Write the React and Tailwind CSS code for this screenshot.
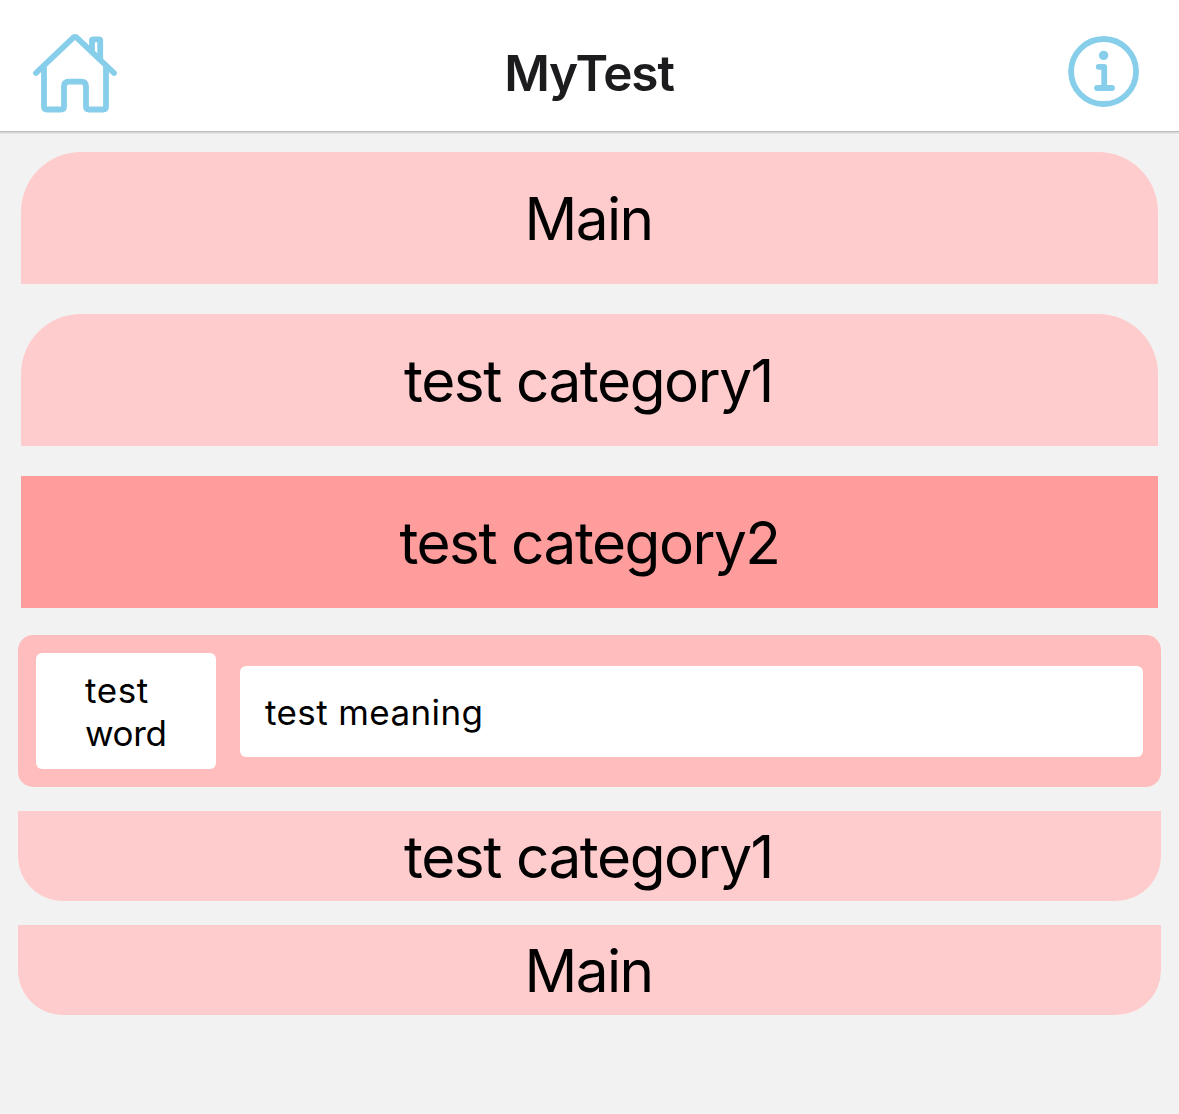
const Home = () => (
  <svg width="84" height="80" viewBox="0 0 84 80" fill="none" stroke="#87ceeb" strokeWidth="5.8" strokeLinecap="round" strokeLinejoin="round">
    <path d="M3 39 39.5 4.3Q42 1.7 44.5 4.3L81 39M11 32V72.5Q11 75.5 14 75.5H28Q31 75.5 31 72.5V52.5Q31 47.7 35.8 47.7H48.2Q53 47.7 53 52.5V72.5Q53 75.5 56 75.5H70Q73 75.5 73 72.5V32M59 18V6.5Q59 5.3 60.2 5.3H65.8Q67.2 5.3 67.2 6.5V25" />
  </svg>
);
const Info = () => (
  <svg width="72" height="72" viewBox="0 0 72 72" fill="none" stroke="#87ceeb" strokeWidth="5.8" strokeLinecap="round" strokeLinejoin="round">
    <circle cx="35.6" cy="35.5" r="32.5" />
    <circle cx="35.6" cy="19.4" r="4.7" fill="#87ceeb" stroke="none" />
    <path d="M30.7 30.8H36.2V52M29 52H44" />
  </svg>
);
const top = "mx-[21px] flex h-[132px] items-center justify-center rounded-t-[60px] bg-[#ffcccd] pt-[2px]";
const bottom = "mx-[18px] mt-6 flex h-[90px] items-center justify-center rounded-b-[45px] bg-[#ffcccd] pt-[2px]";

export default function App() {
  return (
    <div className="h-[1114px] overflow-hidden bg-[#f2f2f2] font-['Inter',sans-serif] text-[58.5px] leading-[72px] tracking-[-1.6px] text-black">
      <header className="flex h-[131px] items-start justify-between bg-white pl-[33px] pr-[39px] pt-[34px] shadow-[0_1px_0_#bfbfbf,0_2px_0_#d5d5d5,0_3px_0_#e4e4e4]">
        <Home />
        <h1 className="mr-[7px] mt-[9px] text-[49.5px] font-semibold leading-[60px] tracking-[-1.1px] text-[#1c1c1e]">MyTest</h1>
        <div className="mt-[2px]"><Info /></div>
      </header>
      <main className="pt-[21px]">
        <div className={top}><span className="mr-[2px]">Main</span></div>
        <div className={top + " mt-[30px]"}><span className="mr-[2px] tracking-[-1.45px]">test category1</span></div>
        <div className="mx-[21px] mt-[30px] flex h-[132px] items-center justify-center bg-[#ff9c9c] pt-[2px]"><span className="tracking-[-1.5px]">test category2</span></div>
        <div className="mx-[18px] mt-[27px] flex h-[152px] items-center gap-6 rounded-[15px] bg-[#ffbdbe] px-[18px] text-[35px] leading-[43px] tracking-[0.4px]">
          <div className="flex h-[116px] w-[180px] items-center rounded-md bg-white pl-[49px] pt-[1px]"><span><span className="tracking-[0.6px]">test</span><br /><span className="tracking-[-0.4px]">word</span></span></div>
          <div className="flex h-[91px] flex-1 items-center rounded-md bg-white pl-[25px] pt-[3px]"><span>test meaning</span></div>
        </div>
        <div className={bottom}><span className="mr-[2px] tracking-[-1.45px]">test category1</span></div>
        <div className={bottom}><span className="mr-[2px]">Main</span></div>
      </main>
    </div>
  );
}
